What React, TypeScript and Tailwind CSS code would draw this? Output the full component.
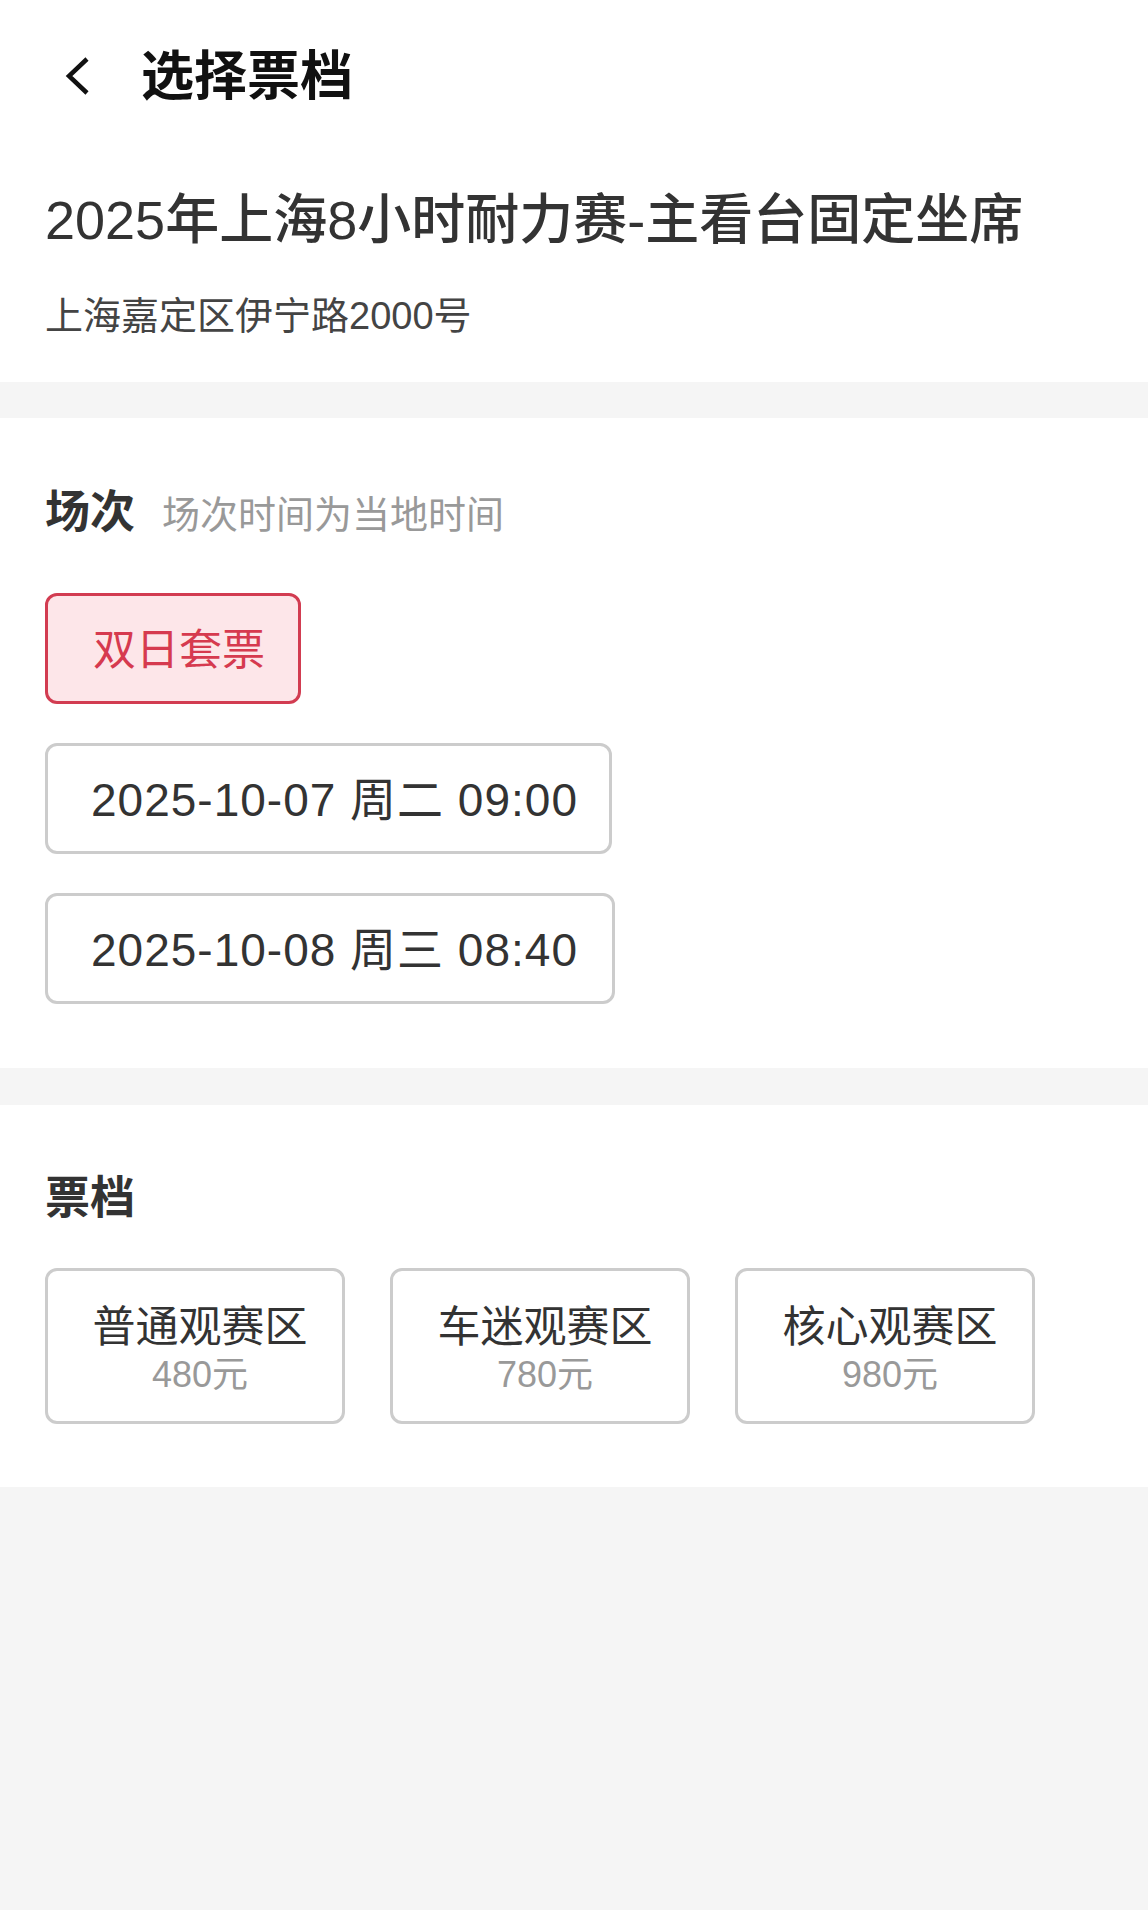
import React from "react";

const font = { fontFamily: '"Liberation Sans", "Noto Sans CJK SC", sans-serif' };

export default function App() {
  return (
    <div className="min-h-[1910px] w-full bg-[#f5f5f5]" style={font}>
      {/* header + event info */}
      <div className="bg-white">
        <div className="flex h-[152px] items-center pl-[64px]">
          <svg width="26" height="40" viewBox="0 0 26 40" className="shrink-0">
            <path d="M23 3 L5 20 L23 37" fill="none" stroke="#111" strokeWidth="4.5" strokeLinejoin="miter" />
          </svg>
          <div className="ml-[51px] text-[53px] font-bold leading-none text-[#111]">选择票档</div>
        </div>
        <div className="px-[45px] pt-[32px] pb-[41px]">
          <div className="text-[54px] font-medium leading-[72px] text-[#333]">2025年上海8小时耐力赛-主看台固定坐席</div>
          <div className="mt-[35px] text-[38px] leading-[50px] text-[#444]">上海嘉定区伊宁路2000号</div>
        </div>
      </div>

      <div className="h-[36px]" />

      {/* 场次 */}
      <div className="bg-white px-[45px] pt-[65px] pb-[64px]">
        <div className="flex h-[60px] items-baseline">
          <span className="text-[45px] font-bold leading-[60px] text-[#333]">场次</span>
          <span className="ml-[27px] text-[38px] leading-[60px] text-[#999]">场次时间为当地时间</span>
        </div>
        <div className="mt-[50px] flex flex-col items-start gap-[39px]">
          <button className="flex h-[111px] w-[256px] items-center rounded-[12px] border-[3px] border-[#d23c51] bg-[#fde6e9] pl-[45px] pt-[3px] text-[43px] leading-none text-[#d63a4f]">
            双日套票
          </button>
          <button className="flex h-[111px] w-[567px] items-center rounded-[12px] border-[3px] border-[#cccccc] bg-white pl-[43px] pt-[2px] text-[46px] leading-none tracking-[1px] text-[#333]">
            2025-10-07 周二 09:00
          </button>
          <button className="flex h-[111px] w-[570px] items-center rounded-[12px] border-[3px] border-[#cccccc] bg-white pl-[43px] pt-[2px] text-[46px] leading-none tracking-[1px] text-[#333]">
            2025-10-08 周三 08:40
          </button>
        </div>
      </div>

      <div className="h-[37px]" />

      {/* 票档 */}
      <div className="bg-white px-[45px] pt-[64px] pb-[63px]">
        <div className="text-[45px] font-bold leading-[60px] text-[#333]">票档</div>
        <div className="mt-[39px] flex gap-[45px]">
          {[
            ["普通观赛区", "480元"],
            ["车迷观赛区", "780元"],
            ["核心观赛区", "980元"],
          ].map(([name, price]) => (
            <div
              key={name}
              className="flex h-[156px] w-[300px] flex-col items-center justify-center rounded-[12px] border-[3px] border-[#cccccc] bg-white pl-[10px] pt-[9px]"
            >
              <div className="text-[43px] leading-[48px] text-[#333]">{name}</div>
              <div className="text-[36px] leading-[48px] text-[#999]">{price}</div>
            </div>
          ))}
        </div>
      </div>
    </div>
  );
}
